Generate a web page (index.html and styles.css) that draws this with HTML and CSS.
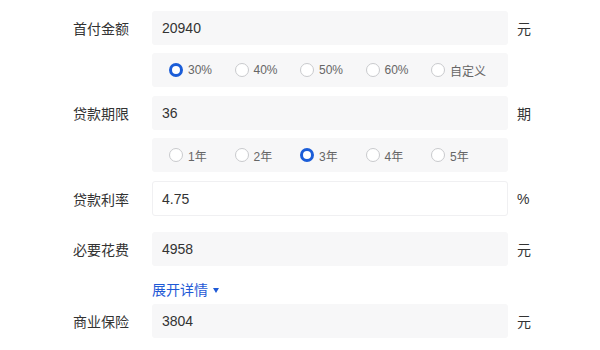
FILE: index.html
```html
<!DOCTYPE html>
<html>
<head>
<meta charset="utf-8">
<link rel="stylesheet" href="styles.css">
</head>
<body>
<div class="form">
  <div class="row">
    <div class="label">首付金额</div>
    <div class="field">20940</div>
    <div class="unit">元</div>
  </div>
  <div class="row sub">
    <div class="label"></div>
    <div class="radios">
      <div class="radio on"><span class="dot"></span>30%</div>
      <div class="radio"><span class="dot"></span>40%</div>
      <div class="radio"><span class="dot"></span>50%</div>
      <div class="radio"><span class="dot"></span>60%</div>
      <div class="radio"><span class="dot"></span>自定义</div>
    </div>
  </div>
  <div class="row next">
    <div class="label">贷款期限</div>
    <div class="field">36</div>
    <div class="unit">期</div>
  </div>
  <div class="row sub">
    <div class="label"></div>
    <div class="radios">
      <div class="radio"><span class="dot"></span>1年</div>
      <div class="radio"><span class="dot"></span>2年</div>
      <div class="radio on"><span class="dot"></span>3年</div>
      <div class="radio"><span class="dot"></span>4年</div>
      <div class="radio"><span class="dot"></span>5年</div>
    </div>
  </div>
  <div class="row next">
    <div class="label">贷款利率</div>
    <div class="field white">4.75</div>
    <div class="unit">%</div>
  </div>
  <div class="row wide">
    <div class="label">必要花费</div>
    <div class="field">4958</div>
    <div class="unit">元</div>
  </div>
  <div class="row linkrow">
    <div class="label"></div>
    <div class="link">展开详情<span class="tri"></span></div>
  </div>
  <div class="row">
    <div class="label">商业保险</div>
    <div class="field">3804</div>
    <div class="unit">元</div>
  </div>
</div>
</body>
</html>
```

FILE: styles.css
```css
html, body {
  margin: 0;
  padding: 0;
  background: #fff;
}
body {
  font-family: "Liberation Sans", "Noto Sans CJK SC", sans-serif;
  color: #333;
}
.form {
  padding: 11px 0 0 73px;
}
.row {
  display: flex;
  align-items: center;
}
.row.sub {
  margin-top: 8px;
}
.row.next {
  margin-top: 9px;
}
.row.wide {
  margin-top: 16px;
}
.label {
  width: 79px;
  flex: none;
  font-size: 14px;
  color: #333;
  font-family: "Noto Sans CJK SC", sans-serif;
}
.field {
  width: 356px;
  height: 34px;
  box-sizing: border-box;
  background: #f7f7f8;
  border-radius: 3px;
  padding-left: 10px;
  display: flex;
  align-items: center;
  font-size: 14px;
  color: #333;
}
.field.white {
  background: #fff;
  border: 1px solid #f0f0f2;
  height: 35px;
  padding-left: 9px;
}
.unit {
  margin-left: 9px;
  font-size: 14px;
  color: #333;
  font-family: "Liberation Sans", "Noto Sans CJK SC", sans-serif;
}
.radios {
  width: 356px;
  height: 34px;
  box-sizing: border-box;
  background: #f7f7f8;
  border-radius: 3px;
  padding-left: 17px;
  display: grid;
  grid-template-columns: repeat(5, 65.5px);
  align-items: center;
}
.radio {
  display: flex;
  align-items: center;
  font-size: 12px;
  color: #666;
}
.dot {
  width: 14px;
  height: 14px;
  box-sizing: border-box;
  border-radius: 50%;
  border: 1px solid #c9cacd;
  background: #fff;
  margin-right: 5px;
  flex: none;
}
.radio.on .dot {
  border: 3px solid #1b5dd8;
}
.linkrow {
  margin-top: 13px;
  height: 20px;
  margin-bottom: 5px;
}
.link {
  font-size: 14px;
  color: #1f5ad6;
  font-family: "Noto Sans CJK SC", sans-serif;
  display: flex;
  align-items: center;
}
.tri {
  width: 0;
  height: 0;
  border-left: 3.5px solid transparent;
  border-right: 3.5px solid transparent;
  border-top: 5px solid #1f5ad6;
  margin-left: 5px;
  margin-top: 2px;
}
```
